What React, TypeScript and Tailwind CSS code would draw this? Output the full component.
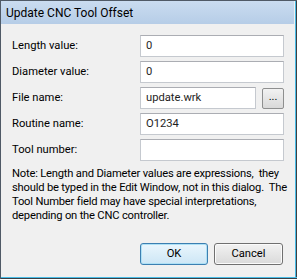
import React from "react";

const rows = [
  { label: "Length value:", value: "0" },
  { label: "Diameter value:", value: "0" },
  { label: "File name:", value: "update.wrk", browse: true },
  { label: "Routine name:", value: "O1234" },
  { label: "Tool number:", value: "" },
];

const noteLines = [
  "Note: Length and Diameter values are expressions,  they",
  "should be typed in the Edit Window, not in this dialog.  The",
  "Tool Number field may have special interpretations,",
  "depending on the CNC controller.",
];

function Field({ value }: { value: string }) {
  return (
    <div className="flex h-[22px] flex-1 items-center border border-[#c5c9cf] border-t-[#abadb3] bg-white px-[5px] text-[#1e1e1e]">
      {value}
    </div>
  );
}

export default function App() {
  return (
    <div
      className="flex h-[279px] w-[297px] flex-col border-t border-l border-[#505a66] bg-[#f0f0f0] text-[11.2px] text-black"
      style={{ fontFamily: 'Roboto, "Noto Sans", sans-serif' }}
    >
      <div className="flex min-h-0 flex-1">
        <div className="flex min-w-0 flex-1 flex-col">
          {/* title bar */}
          <div className="flex h-[23px] items-center bg-gradient-to-b from-[#cadcf0] to-[#b6cde7] pl-[5px] text-[12px] text-black">
            Update CNC Tool Offset
          </div>

          <div className="flex flex-1 flex-col pl-[11px] pr-[10px] pt-[11px]">
            <div className="flex flex-col gap-[4px]">
              {rows.map((r) => (
                <div key={r.label} className="flex items-center">
                  <div className="w-[128px] shrink-0 pt-[1px]">{r.label}</div>
                  {r.browse ? (
                    <div className="flex flex-1 items-center gap-[6px]">
                      <Field value={r.value} />
                      <button className="flex h-[21px] w-[22px] items-center justify-center rounded-[2px] border border-[#8e8f8f] bg-gradient-to-b from-[#f2f2f2] to-[#d9d9d9] pb-[4px] text-[11px] leading-none">
                        ...
                      </button>
                    </div>
                  ) : (
                    <Field value={r.value} />
                  )}
                </div>
              ))}
            </div>

            <div className="mt-[6px] leading-[14px] tracking-[-0.2px]">
              {noteLines.map((l) => (
                <div key={l} className="whitespace-pre">
                  {l}
                </div>
              ))}
            </div>

            <div className="mt-[20px] flex justify-end gap-[6px] pr-[1px]">
              <button className="h-[22px] w-[68px] rounded-[3px] border border-[#3c7fb1] bg-gradient-to-b from-[#eaf6fd] to-[#cde6f5] shadow-[inset_0_0_0_1px_#aee0f5]">
                OK
              </button>
              <button className="h-[22px] w-[69px] rounded-[3px] border border-[#707070] bg-gradient-to-b from-[#f2f2f2] to-[#dadada] shadow-[inset_0_0_0_1px_#fbfbfb]">
                Cancel
              </button>
            </div>
          </div>
        </div>
        <div className="w-px bg-[#f0f0f0]" />
        <div className="w-px bg-[#48bce6]" />
        <div className="w-px bg-[#3b3f44]" />
      </div>
      <div className="h-px bg-[#48bce6]" />
      <div className="h-px bg-[#3b3f44]" />
    </div>
  );
}
